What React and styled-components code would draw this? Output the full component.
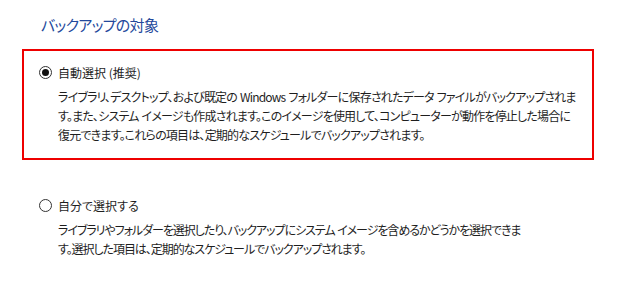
import React, { useState } from 'react';
import styled, { createGlobalStyle } from 'styled-components';

const GlobalStyle = createGlobalStyle`
  html, body {
    margin: 0;
    padding: 0;
    background: #ffffff;
  }
  body {
    font-family: "Noto Sans CJK JP", "Noto Sans", sans-serif;
    font-feature-settings: "palt" 1;
    color: #1e1e1e;
  }
`;

const Page = styled.div`
  width: 617px;
  height: 285px;
  padding-top: 15px;
  box-sizing: border-box;
  overflow: hidden;
`;

const Title = styled.h1`
  margin: 0 0 14px 41px;
  font-size: 15px;
  line-height: 20px;
  font-weight: 400;
  letter-spacing: -0.7px;
  color: #23489b;
`;

const OptionBox = styled.div`
  margin-left: 22px;
  width: 572px;
  box-sizing: border-box;
  border: 2px solid ${(p) => (p.$highlight ? '#ee0000' : 'transparent')};
  padding: 12px 14px 14px 15px;
  margin-bottom: ${(p) => (p.$last ? '0' : '22px')};
`;

const Row = styled.label`
  display: flex;
  align-items: center;
  gap: 6px;
  height: 19px;
  font-size: 12px;
  cursor: default;
`;

const Radio = styled.span`
  width: 13px;
  height: 13px;
  box-sizing: border-box;
  border: 1px solid #333333;
  border-radius: 50%;
  display: flex;
  align-items: center;
  justify-content: center;
  background: #ffffff;

  &::after {
    content: '';
    width: 7px;
    height: 7px;
    border-radius: 50%;
    background: ${(p) => (p.$checked ? '#111111' : 'transparent')};
  }
`;

const Description = styled.p`
  margin: 5px 0 0 19px;
  font-size: 12px;
  line-height: 19px;
  letter-spacing: ${(p) => p.$tracking || '-0.8px'};
  word-spacing: 1px;
  white-space: nowrap;
`;

const options = [
  {
    id: 'auto',
    label: '自動選択 (推奨)',
    tracking: '-0.8px',
    lines: [
      'ライブラリ、デスクトップ、および既定の Windows フォルダーに保存されたデータ ファイルがバックアップされま',
      'す。また、システム イメージも作成されます。このイメージを使用して、コンピューターが動作を停止した場合に',
      '復元できます。これらの項目は、定期的なスケジュールでバックアップされます。',
    ],
  },
  {
    id: 'manual',
    label: '自分で選択する',
    tracking: '-1.05px',
    lines: [
      'ライブラリやフォルダーを選択したり、バックアップにシステム イメージを含めるかどうかを選択できま',
      'す。選択した項目は、定期的なスケジュールでバックアップされます。',
    ],
  },
];

const App = () => {
  const [selected, setSelected] = useState('auto');

  return (
    <>
      <GlobalStyle />
      <Page>
        <Title>バックアップの対象</Title>
        {options.map((o, i) => (
          <OptionBox key={o.id} $highlight={i === 0} $last={i === options.length - 1}>
            <Row onClick={() => setSelected(o.id)}>
              <Radio $checked={selected === o.id} />
              {o.label}
            </Row>
            <Description $tracking={o.tracking}>
              {o.lines.map((l, j) => (
                <React.Fragment key={j}>
                  {l}
                  {j < o.lines.length - 1 && <br />}
                </React.Fragment>
              ))}
            </Description>
          </OptionBox>
        ))}
      </Page>
    </>
  );
};

export default App;
